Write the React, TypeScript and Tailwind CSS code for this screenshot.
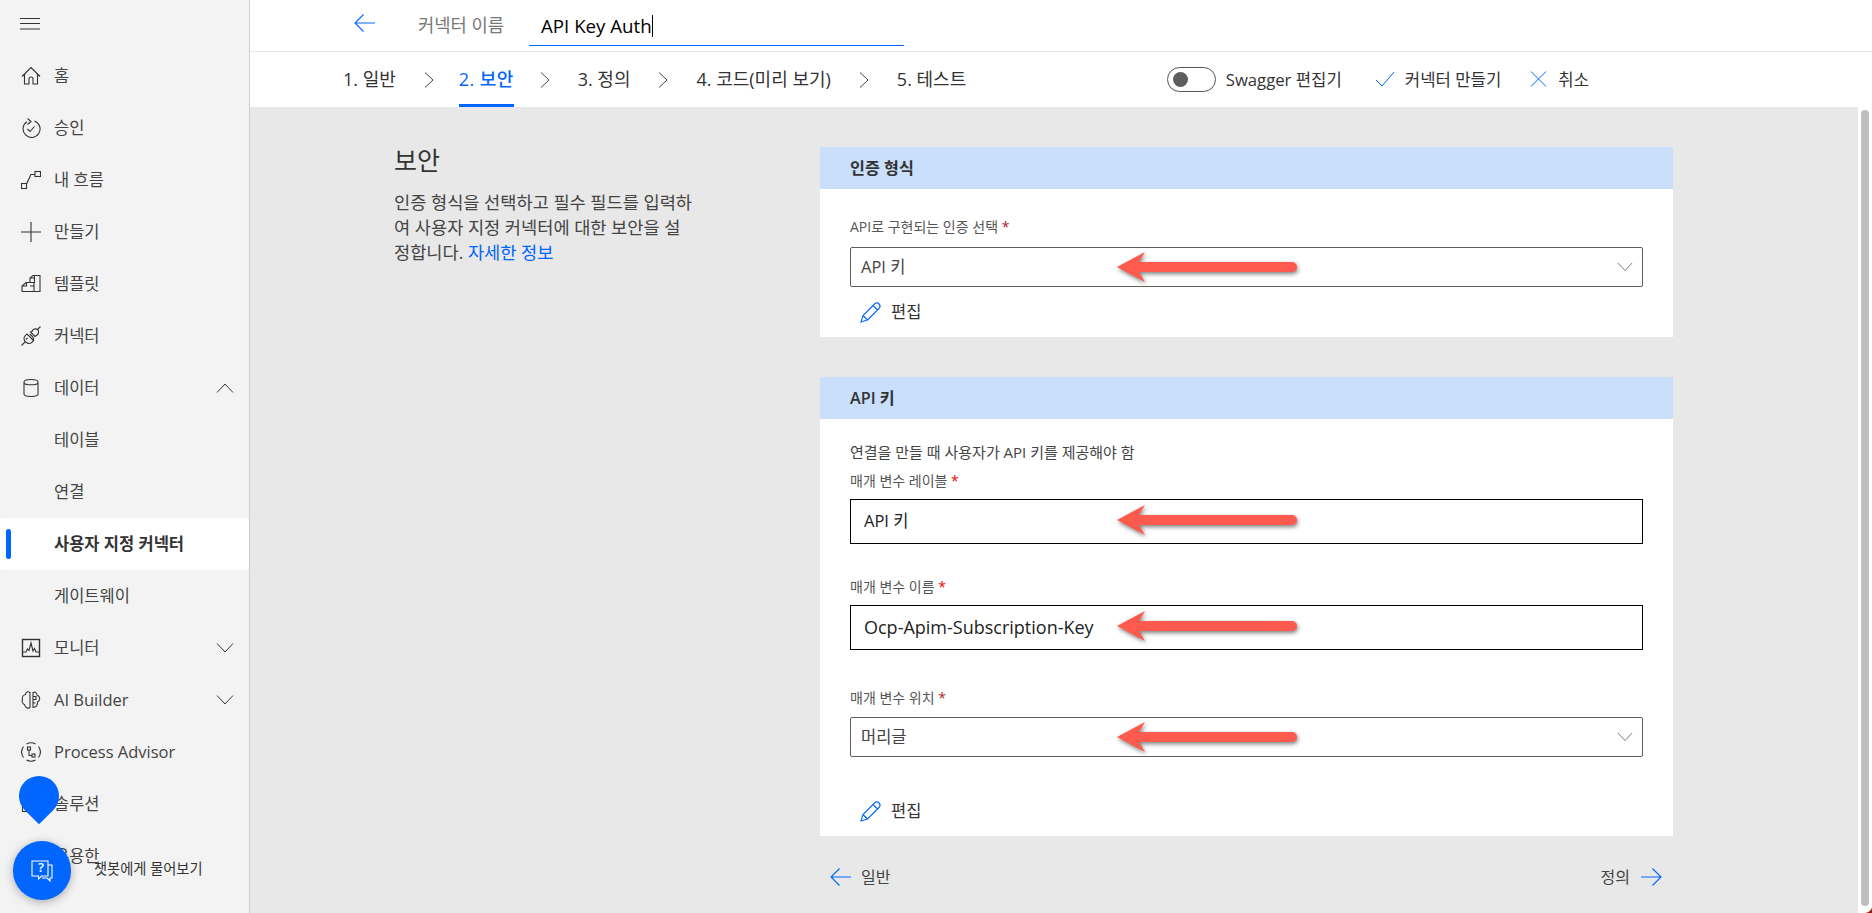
import React from 'react';

const font = "font-['Open_Sans','Noto_Sans_CJK_KR',sans-serif]";

const Svg: React.FC<{ size?: number; className?: string; children: React.ReactNode }> = ({ size = 20, className = '', children }) => (
  <svg width={size} height={size} viewBox="0 0 20 20" fill="none" stroke="currentColor" strokeWidth="1.1" className={`shrink-0 ${className}`}>
    {children}
  </svg>
);

const HomeIcon = () => (
  <Svg><path d="M1 10.500 10 1.500l9 9M3.500 8.500V18H8v-5a2 2 0 0 1 4 0v5h4.500V8.500" /></Svg>
);
const ApprovalIcon = () => (
  <Svg><path d="M6 3.800A8.500 8.500 0 1 0 13.500 3M6.500.5l3.500 3-3.500 3" /><path d="m6.500 11 2.500 2.500 4.500-5" /></Svg>
);
const FlowIcon = () => (
  <Svg><rect x="0.500" y="13.500" width="5" height="5" /><rect x="14" y="1.500" width="5.500" height="5" /><path d="m5.500 14 4.500-9.500h4" /></Svg>
);
const PlusIcon = () => (
  <Svg><path d="M0 10h20M10 0v20" /></Svg>
);
const TemplateIcon = () => (
  <Svg><path d="M1 17.500V12l4-3.500h4V4l3-2.500h7v16zM5.500 8.500V12H1M9 8.500h4.500V2M9 4h4.500M9 12H13V8.500M13 12v5.500" /></Svg>
);
const ConnectorIcon = () => (
  <Svg><path d="m.5 19.500 3.500-3.500M16.500 3.500l3-3" /><path d="M8.800 8 12 11.200a4.300 4.300 0 0 1-6.500 5.300 4.300 4.300 0 0 1-1-7.200L6 8l7 7M6.500 12l-1.500 1.500" /><path d="M11 5.500a3.600 3.600 0 0 1 5.500-2 3.600 3.600 0 0 1-.5 5.500L14 10.500 9.500 6z" /></Svg>
);
const DataIcon = () => (
  <Svg><path d="M3 4v12c0 1.700 3 2.500 7 2.500s7-.8 7-2.500V4c0-1.700-3-2.500-7-2.500S3 2.300 3 4zM3 4.500c0 1.500 3 2.300 7 2.300s7-.8 7-2.300" /></Svg>
);
const MonitorIcon = () => (
  <Svg><rect x="1.500" y="1.500" width="17" height="17" strokeWidth="1.400" /><path d="M1.500 14H5l1.500-3 1.500 1.500L10 5l2 8 1.500-2.500 1.500 3.500h3.500" /></Svg>
);
const BrainIcon = () => (
  <Svg><path d="M9 2.500C7 1 4.500 2 4.500 4.500 2.500 5 1 7 1.500 9 .5 11 1.500 14 3.500 14.500 4 17.500 7.500 19 9 17.500zM12 2.500c2-1 4 .5 4 2.500 2 1 3 3 2.500 5-.5 1-1 1.500-2 2 .5 3-1.500 5.500-4.500 5.500zM12 6.500h3v3h-3M12 13h2.500" /></Svg>
);
const AdvisorIcon = () => (
  <Svg>
    <path d="M5.500 2a9.500 9.500 0 0 1 9 0M5.500 18a9.500 9.500 0 0 0 9 0M2.500 4.500a9.500 9.500 0 0 0 0 11M17.500 4.500a9.500 9.500 0 0 1 0 11" />
    <rect x="6.500" y="5" width="3" height="3" />
    <rect x="11" y="12" width="3" height="3" />
    <path d="M8 8v5.500h3" />
  </Svg>
);
const SolutionIcon = () => (
  <Svg><rect x="1.500" y="3.500" width="17" height="14" /><path d="M1.500 7.500h17" /></Svg>
);

const ChevronDown: React.FC<{ size?: number; className?: string }> = ({ size = 18, className = '' }) => (
  <svg width={size} height={size} viewBox="0 0 18 18" fill="none" stroke="currentColor" strokeWidth="1" className={`shrink-0 ${className}`}>
    <path d="m1 4.500 8 8.500 8-8.500" />
  </svg>
);

const ChevronUp = () => (
  <svg width="18" height="18" viewBox="0 0 18 18" fill="none" stroke="currentColor" strokeWidth="1" className="shrink-0">
    <path d="m1 13.500 8-8.500 8 8.500" />
  </svg>
);

const StepChevron = () => (
  <svg width="10" height="16" viewBox="0 0 10 16" fill="none" stroke="#444" strokeWidth="1" className="shrink-0">
    <path d="m1 .5 8 7.500-8 7.500" />
  </svg>
);

const ArrowLeft: React.FC<{ className?: string }> = ({ className = '' }) => (
  <svg width="21" height="18" viewBox="0 0 21 18" fill="none" stroke="#0066ff" strokeWidth="1.100" className={`shrink-0 ${className}`}>
    <path d="M21 9H1M9.500.5 1 9l8.500 8.500" />
  </svg>
);

const ArrowRight = () => (
  <svg width="21" height="18" viewBox="0 0 21 18" fill="none" stroke="#0066ff" strokeWidth="1.100" className="shrink-0">
    <path d="M0 9h20M11.500.5 20 9l-8.500 8.500" />
  </svg>
);

const PencilIcon = () => (
  <svg width="21" height="21" viewBox="0 0 21 21" fill="none" stroke="#0066ff" strokeWidth="1.100" className="shrink-0">
    <path d="M1 20 3 13.500 14.500 2a2.500 2.500 0 0 1 4.500 4.500L7.500 18z M3 13.500 7.500 18M13 3.500l4.500 4.500" />
  </svg>
);

// the red callout arrows pasted over the screenshot
const CalloutArrow: React.FC<{ className?: string }> = ({ className = '' }) => (
  <svg
    width="182"
    height="36"
    viewBox="0 0 182 36"
    className={`absolute left-[265px] top-[2px] drop-shadow-[1px_2px_2px_rgba(0,0,0,0.5)] ${className}`}
  >
    <path fill="#ff5a4e" d="M1 17 29 2l-6 10h153a5 5 0 0 1 0 10H23l6 10z" />
  </svg>
);

const NavItem: React.FC<{
  icon?: React.ReactNode;
  label: string;
  trailing?: React.ReactNode;
  active?: boolean;
}> = ({ icon, label, trailing, active }) => (
  <div className={`relative h-[52px] flex items-center shrink-0 ${active ? 'bg-white rounded-[2px]' : ''}`}>
    {active && <span className="absolute left-[6px] top-[11px] w-[5px] h-[30px] rounded-full bg-[#0066ff]" />}
    <span className="w-[54px] pl-[21px] flex items-center text-[#333]">{icon}</span>
    <span className={`text-[16.500px] whitespace-nowrap ${active ? 'font-semibold text-[#333]' : 'text-[#444]'}`}>
      {label}
    </span>
    {trailing && <span className="ml-auto mr-[15px] flex text-[#333]">{trailing}</span>}
  </div>
);

const Sidebar = () => (
  <aside className="relative w-[250px] h-full shrink-0 bg-[#f3f3f3] border-r border-[#cfcfcf] flex flex-col overflow-hidden">
    <div className="h-[50px] pl-[20px] pt-[18px] shrink-0">
      <svg width="20" height="12" viewBox="0 0 20 12" stroke="#333" strokeWidth="1"><path d="M0 .5h20M0 5.500h20M0 11h20" /></svg>
    </div>
    <NavItem icon={<HomeIcon />} label="홈" />
    <NavItem icon={<ApprovalIcon />} label="승인" />
    <NavItem icon={<FlowIcon />} label="내 흐름" />
    <NavItem icon={<PlusIcon />} label="만들기" />
    <NavItem icon={<TemplateIcon />} label="템플릿" />
    <NavItem icon={<ConnectorIcon />} label="커넥터" />
    <NavItem icon={<DataIcon />} label="데이터" trailing={<ChevronUp />} />
    <NavItem label="테이블" />
    <NavItem label="연결" />
    <NavItem label="사용자 지정 커넥터" active />
    <NavItem label="게이트웨이" />
    <NavItem icon={<MonitorIcon />} label="모니터" trailing={<ChevronDown />} />
    <NavItem icon={<BrainIcon />} label="AI Builder" trailing={<ChevronDown />} />
    <NavItem icon={<AdvisorIcon />} label="Process Advisor" />
    <NavItem icon={<SolutionIcon />} label="솔루션" />
    <NavItem icon={<SolutionIcon />} label="유용한" />

    {/* chat bot widget sits on top of the last rows */}
    <div className="absolute left-[19px] top-[776px] w-[40px] h-[40px] rounded-full rounded-br-none rotate-45 bg-[#0066ff]" />
    <div className="absolute left-[13px] top-[841px] w-[58px] h-[59px] rounded-full bg-[#0066ff] shadow-[0_2px_10px_rgba(0,0,0,0.3)] flex items-center justify-center">
      <svg width="24" height="24" viewBox="0 0 24 24" fill="none" stroke="white" strokeWidth="1.100">
        <path d="M2 2h16v15h-6.500l-3 3v-3H2z" />
        <path d="M18 6h4v13h-2v3l-3-3h-5" />
      </svg>
      <span className="absolute text-white text-[13px] font-semibold left-[25px] top-[17px]">?</span>
    </div>
    <div className="absolute left-[94px] top-[859px] text-[14.250px] leading-[20px] text-[#333] whitespace-nowrap">챗봇에게 물어보기</div>
  </aside>
);

const Header = () => (
  <header className="h-[52px] shrink-0 bg-white border-b border-[#e6e6e6] flex items-center">
    <div className="ml-[104px] mb-[6px]"><ArrowLeft /></div>
    <span className="ml-[43px] w-[111px] text-[17.700px] text-[#777] whitespace-nowrap">커넥터 이름</span>
    <div className="w-[375px] h-[46px] mb-[5px] border-b border-[#0066ff] pl-[12px] flex items-center">
      <span className="text-[18.700px] text-black leading-[22px] mt-[7px] border-r border-black whitespace-nowrap">API Key Auth</span>
    </div>
  </header>
);

const StepBar = () => (
  <nav className="h-[55px] shrink-0 bg-white flex items-center text-[18px] text-[#333] whitespace-nowrap">
    <div className="ml-[93px] flex items-center gap-[28px] h-full">
      <span>1. 일반</span>
      <StepChevron />
      <span className="relative h-full flex items-center ml-[-3px] mr-[-2px] tracking-[0.4px] font-medium text-[#0066ff]">
        2. 보안
        <span className="absolute left-0 right-0 bottom-0 h-[3px] bg-[#0066ff]" />
      </span>
      <StepChevron />
      <span>3. 정의</span>
      <StepChevron />
      <span>4. 코드(미리 보기)</span>
      <StepChevron />
      <span>5. 테스트</span>
    </div>
    <div className="ml-auto mr-[283px] flex items-center text-[16.700px]">
      <span className="w-[49px] h-[25px] rounded-full border border-[#555] flex items-center pl-[5px]">
        <span className="w-[15px] h-[15px] rounded-full bg-[#605e5c]" />
      </span>
      <span className="ml-[10px]">Swagger 편집기</span>
      <svg width="20" height="16" viewBox="0 0 20 16" fill="none" stroke="#0066ff" className="ml-[33px]">
        <path d="m1 9 6 6L19 1" />
      </svg>
      <span className="ml-[10px]">커넥터 만들기</span>
      <svg width="17" height="16" viewBox="0 0 17 16" fill="none" stroke="#0066ff" className="ml-[29px]">
        <path d="m1 .5 15 15M16 .5l-15 15" />
      </svg>
      <span className="ml-[11px]">취소</span>
    </div>
  </nav>
);

const CardHeader: React.FC<{ title: string }> = ({ title }) => (
  <div className="h-[42px] bg-[#c9dffc] pl-[30px] flex items-center text-[16.200px] font-semibold text-[#333]">{title}</div>
);

const FieldLabel: React.FC<{ text: string; dim?: boolean }> = ({ text, dim }) => (
  <div className="text-[14px] leading-[18px] text-[#555] whitespace-nowrap">
    {text} <span className={dim ? 'text-[#a4262c]' : 'text-[#f00000]'}>*</span>
  </div>
);

const Dropdown: React.FC<{ value: string }> = ({ value }) => (
  <div className="relative h-[40px] w-[793px] rounded-[2px] border border-[#605e5c] flex items-center pl-[10px] pr-[9px] text-[16.500px] text-[#444]">
    {value}
    <span className="ml-auto flex text-[#666]"><ChevronDown size={16} /></span>
    <CalloutArrow />
  </div>
);

const TextField: React.FC<{ value: string; textClass: string }> = ({ value, textClass }) => (
  <div className={`relative h-[45px] w-[793px] border border-black flex items-center pl-[13px] text-[#222] ${textClass}`}>
    {value}
    <CalloutArrow className="top-[3px]" />
  </div>
);

const EditLink = () => (
  <div className="flex items-center gap-[10px] pl-[10px] text-[16.500px] text-[#333]">
    <PencilIcon />
    <span>편집</span>
  </div>
);

const Content = () => (
  <main className="flex-1 min-w-0 h-full bg-[#e8e8e8] pl-[144px] pt-[40px] flex">
    <section className="w-[426px] shrink-0">
      <h2 className="text-[25px] leading-[30px] mt-[-2px] text-[#333]">보안</h2>
      <p className="mt-[15px] text-[17.600px] leading-[25px] text-[#444] whitespace-nowrap">
        인증 형식을 선택하고 필수 필드를 입력하<br />
        여 사용자 지정 커넥터에 대한 보안을 설<br />
        정합니다. <span className="text-[#0066ff]">자세한 정보</span>
      </p>
    </section>
    <section className="w-[853px] shrink-0">
      <div className="bg-white h-[190px]">
        <CardHeader title="인증 형식" />
        <div className="px-[30px] pt-[29px]">
          <FieldLabel text="API로 구현되는 인증 선택" dim />
          <div className="mt-[11px]"><Dropdown value="API 키" /></div>
          <div className="mt-[13px]"><EditLink /></div>
        </div>
      </div>
      <div className="mt-[40px] bg-white h-[459px]">
        <CardHeader title="API 키" />
        <div className="px-[30px] pt-[23px]">
          <div className="text-[15px] leading-[20px] text-[#444] whitespace-nowrap">연결을 만들 때 사용자가 API 키를 제공해야 함</div>
          <div className="mt-[10px]"><FieldLabel text="매개 변수 레이블" /></div>
          <div className="mt-[9px]"><TextField value="API 키" textClass="text-[16.500px]" /></div>
          <div className="mt-[34px]"><FieldLabel text="매개 변수 이름" /></div>
          <div className="mt-[9px]"><TextField value="Ocp-Apim-Subscription-Key" textClass="text-[18px]" /></div>
          <div className="mt-[39px]"><FieldLabel text="매개 변수 위치" dim /></div>
          <div className="mt-[10px]"><Dropdown value="머리글" /></div>
          <div className="mt-[42px]"><EditLink /></div>
        </div>
      </div>
      <div className="mt-[29px] flex items-center justify-between pl-[10px] pr-[11px] text-[16px] text-[#444]">
        <span className="flex items-center gap-[10px]"><ArrowLeft />일반</span>
        <span className="flex items-center gap-[11px]">정의<ArrowRight /></span>
      </div>
    </section>
  </main>
);

const Scrollbar = () => (
  <div className="relative w-[14px] h-full shrink-0 bg-white pl-[3px] pr-[3px] pt-[3px] pb-[7px]">
    <div className="w-full h-full rounded-full bg-[#bfbfbf]" />
    {/* bit of the desktop showing through the window's rounded corner */}
    <svg width="7" height="8" viewBox="0 0 7 8" className="absolute right-0 bottom-0">
      <path fill="#9c1c0c" d="M7 0v8H0a7 7 0 0 0 7-8z" />
    </svg>
  </div>
);

export default function App() {
  return (
    <div className={`flex h-screen w-full overflow-hidden bg-white ${font}`}>
      <Sidebar />
      <div className="flex-1 min-w-0 flex flex-col">
        <Header />
        <StepBar />
        <div className="flex-1 min-h-0 flex">
          <Content />
          <Scrollbar />
        </div>
      </div>
    </div>
  );
}
